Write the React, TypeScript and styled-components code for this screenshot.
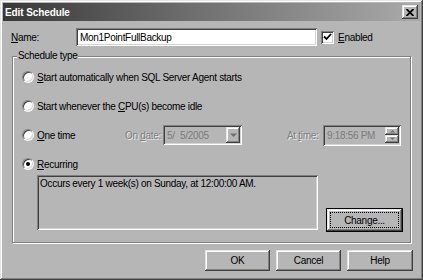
import styled, { createGlobalStyle } from "styled-components";

const GlobalStyle = createGlobalStyle`
  html, body {
    margin: 0;
    padding: 0;
    background: #b6b6b6;
  }
  body {
    font-family: "Liberation Sans", Arial, sans-serif;
    font-size: 10px;
    letter-spacing: -0.3px;
    color: #000;
  }
`;

const raised = `
  box-shadow: inset -1px -1px #404040, inset 1px 1px #e6e6e6,
    inset -2px -2px #808080, inset 2px 2px #fff;
`;

const sunken = `
  box-shadow: inset 1px 1px #808080, inset -1px -1px #fff,
    inset 2px 2px #404040, inset -2px -2px #d4d4d4;
`;

const Window = styled.div`
  width: 423px;
  height: 280px;
  box-sizing: border-box;
  padding: 3px;
  background: #b6b6b6;
  display: flex;
  flex-direction: column;
  ${raised}
`;

const TitleBar = styled.div`
  height: 18px;
  display: flex;
  align-items: center;
  justify-content: space-between;
  padding-left: 2px;
  background: linear-gradient(to right, #383838, #6e6e6e 45%, #aaaaaa);
`;

const Title = styled.span`
  color: #fff;
  font-weight: bold;
  font-size: 10px;
  letter-spacing: -0.1px;
`;

const CloseBtn = styled.div`
  width: 16px;
  height: 14px;
  margin-right: 2px;
  background: #b6b6b6;
  display: flex;
  align-items: center;
  justify-content: center;
  ${raised}
`;

const NameRow = styled.div`
  margin-top: 7px;
  height: 18px;
  padding-left: 8px;
  display: flex;
  align-items: center;
`;

const Label = styled.span<{ $w?: number; $disabled?: boolean }>`
  width: ${(p) => (p.$w ? `${p.$w}px` : "auto")};
  flex-shrink: 0;
  white-space: nowrap;
  color: ${(p) => (p.$disabled ? "#808080" : "#000")};
  text-shadow: ${(p) => (p.$disabled ? "1px 1px 0 #e8e8e8" : "none")};
`;

const Field = styled.div<{ $w: number; $h: number; $white?: boolean; $muted?: boolean }>`
  width: ${(p) => p.$w}px;
  height: ${(p) => p.$h}px;
  box-sizing: border-box;
  flex-shrink: 0;
  padding: 2px 2px 2px 4px;
  display: flex;
  align-items: center;
  justify-content: space-between;
  white-space: pre;
  background: ${(p) => (p.$white ? "#fff" : "#b6b6b6")};
  color: ${(p) => (p.$muted ? "#7c7c7c" : "#000")};
  ${sunken}
`;

const CheckBox = styled.div`
  width: 13px;
  height: 13px;
  margin-left: 4px;
  margin-right: 4px;
  background: #fff;
  display: flex;
  align-items: center;
  justify-content: center;
  ${sunken}
`;

const Group = styled.div`
  position: relative;
  margin: 10px 9px 0 9px;
  height: 187px;
  box-sizing: border-box;
  border: 1px solid #808080;
  box-shadow: inset 1px 1px #fff, 1px 1px #fff;
  padding: 10px 0 0 9px;
  display: flex;
  flex-direction: column;
`;

const Legend = styled.span`
  position: absolute;
  top: -7px;
  left: 4px;
  padding: 0 1px;
  background: #b6b6b6;
`;

const RadioRow = styled.div<{ $last?: boolean }>`
  height: 20px;
  display: flex;
  align-items: center;
  margin-bottom: ${(p) => (p.$last ? 1 : 9)}px;
`;

const RadioLead = styled.div<{ $w?: number }>`
  display: flex;
  align-items: center;
  width: ${(p) => (p.$w ? `${p.$w}px` : "auto")};
  flex-shrink: 0;
`;

const Radio = styled.div<{ $checked?: boolean }>`
  width: 12px;
  height: 12px;
  box-sizing: border-box;
  border-radius: 50%;
  margin-right: 3px;
  background: #fff;
  border: 1px solid;
  border-color: #808080 #f4f4f4 #f4f4f4 #808080;
  box-shadow: inset 1px 1px #404040, inset -1px -1px #d4d4d4;
  display: flex;
  align-items: center;
  justify-content: center;
  &::after {
    content: "";
    width: 4px;
    height: 4px;
    border-radius: 50%;
    background: ${(p) => (p.$checked ? "#000" : "transparent")};
  }
`;

const Gap = styled.div<{ $w: number }>`
  width: ${(p) => p.$w}px;
  flex-shrink: 0;
`;

const DropBtn = styled.div`
  width: 14px;
  height: 16px;
  background: #b6b6b6;
  display: flex;
  align-items: center;
  justify-content: center;
  ${raised}
`;

const Spin = styled.div`
  display: flex;
  flex-direction: column;
  margin-top: -1px;
`;

const SpinBtn = styled.div`
  width: 14px;
  height: 8px;
  background: #b6b6b6;
  display: flex;
  align-items: center;
  justify-content: center;
  ${raised}
`;

const RecurBody = styled.div`
  display: flex;
  align-items: flex-end;
  margin-left: 15px;
`;

const RecurBox = styled.div`
  width: 281px;
  height: 55px;
  box-sizing: border-box;
  padding: 3px 3px;
  background: #b6b6b6;
  ${sunken}
`;

const Button = styled.div<{ $w: number; $h: number; $default?: boolean }>`
  position: relative;
  width: ${(p) => p.$w}px;
  height: ${(p) => p.$h}px;
  box-sizing: border-box;
  display: flex;
  align-items: center;
  justify-content: center;
  background: #b6b6b6;
  border: ${(p) => (p.$default ? "1px solid #000" : "none")};
  ${raised}
  &::after {
    content: "";
    display: ${(p) => (p.$default ? "block" : "none")};
    position: absolute;
    inset: 3px;
    border: 1px dotted #000;
  }
`;

const ChangeButton = styled(Button)`
  margin-left: 8px;
  margin-bottom: -2px;
`;

const ButtonRow = styled.div`
  display: flex;
  justify-content: flex-end;
  gap: 6px;
  margin-top: 7px;
  padding-right: 7px;
`;

const Arrow = ({ up, size = 7 }: { up?: boolean; size?: number }) => (
  <svg width={size} height={Math.ceil(size / 2) + 1} viewBox="0 0 7 4">
    <path d={up ? "M0 4 L3.5 0.5 L7 4 Z" : "M0 0 L3.5 3.5 L7 0 Z"} fill="#707070" />
  </svg>
);

export default function App() {
  return (
    <>
      <GlobalStyle />
      <Window>
        <TitleBar>
          <Title>Edit Schedule</Title>
          <CloseBtn>
            <svg width="8" height="7" viewBox="0 0 8 7">
              <path d="M0.5 0 L7.5 7 M7.5 0 L0.5 7" stroke="#000" strokeWidth="1.8" />
            </svg>
          </CloseBtn>
        </TitleBar>

        <NameRow>
          <Label $w={65}>
            <u>N</u>ame:
          </Label>
          <Field $w={241} $h={18} $white>
            Mon1PointFullBackup
          </Field>
          <CheckBox>
            <svg width="9" height="8" viewBox="0 0 9 8">
              <path d="M1 3.5 L3.5 6 L8 1" stroke="#000" strokeWidth="1.8" fill="none" />
            </svg>
          </CheckBox>
          <Label>
            <u>E</u>nabled
          </Label>
        </NameRow>

        <Group>
          <Legend>Schedule type</Legend>
          <RadioRow>
            <Radio />
            <Label>
              <u>S</u>tart automatically when SQL Server Agent starts
            </Label>
          </RadioRow>
          <RadioRow>
            <Radio />
            <Label>
              Start whenever the <u>C</u>PU(s) become idle
            </Label>
          </RadioRow>
          <RadioRow>
            <RadioLead $w={103}>
              <Radio />
              <Label>
                <u>O</u>ne time
              </Label>
            </RadioLead>
            <Label $w={38} $disabled>
              On <u>d</u>ate:
            </Label>
            <Field $w={79} $h={20} $muted>
              <span>{"5/\u20075/2005"}</span>
              <DropBtn>
                <Arrow />
              </DropBtn>
            </Field>
            <Gap $w={45} />
            <Label $w={36} $disabled>
              At <u>t</u>ime:
            </Label>
            <Field $w={78} $h={21} $muted>
              <span>9:18:56 PM</span>
              <Spin>
                <SpinBtn>
                  <Arrow up size={5} />
                </SpinBtn>
                <SpinBtn>
                  <Arrow size={5} />
                </SpinBtn>
              </Spin>
            </Field>
          </RadioRow>
          <RadioRow $last>
            <Radio $checked />
            <Label>
              <u>R</u>ecurring
            </Label>
          </RadioRow>
          <RecurBody>
            <RecurBox>Occurs every 1 week(s) on Sunday, at 12:00:00 AM.</RecurBox>
            <ChangeButton $w={77} $h={24} $default>
              <span>
                Chan<u>g</u>e...
              </span>
            </ChangeButton>
          </RecurBody>
        </Group>

        <ButtonRow>
          <Button $w={65} $h={21}>OK</Button>
          <Button $w={65} $h={21}>Cancel</Button>
          <Button $w={66} $h={21}>Help</Button>
        </ButtonRow>
      </Window>
    </>
  );
}
